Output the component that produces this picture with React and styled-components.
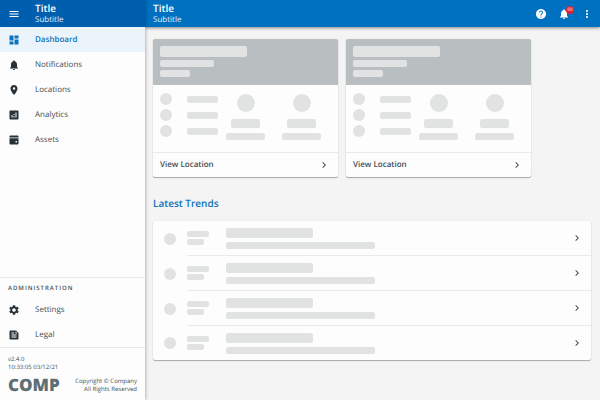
import React from "react";
import styled, { createGlobalStyle, css } from "styled-components";
import {
  MdMenu,
  MdDashboard,
  MdNotifications,
  MdPlace,
  MdAnalytics,
  MdSettings,
  MdFeed,
  MdHelp,
  MdMoreVert,
  MdChevronRight,
} from "react-icons/md";

const GlobalStyle = createGlobalStyle`
  *, *::before, *::after { box-sizing: border-box; }
  body {
    margin: 0;
    background: #f4f4f4;
    color: #424e54;
    font-family: "Open Sans", "Noto Sans", sans-serif;
    font-size: 8px;
    line-height: 11px;
    text-rendering: geometricPrecision;
  }
  svg { display: block; flex: none; }
`;

const Page = styled.div`
  display: flex;
  min-height: 100vh;
`;

const Drawer = styled.aside`
  position: relative;
  display: flex;
  flex: 0 0 145px;
  flex-direction: column;
  background: #fdfdfd;
  box-shadow: 0 0 4px rgba(0, 0, 0, 0.4);
`;

const Main = styled.main`
  flex: 1;
  min-width: 0;
`;

const Bar = styled.header`
  display: flex;
  align-items: center;
  height: 27px;
  padding: ${(p) => (p.$drawer ? "0" : "0 7px 0 8px")};
  background: ${(p) => (p.$drawer ? "#005eae" : "#0070c0")};
  color: #fff;
  box-shadow: ${(p) => (p.$drawer ? "none" : "0 1px 3px rgba(0, 0, 0, 0.45)")};
`;

const Titles = styled.div`
  flex: 1;
`;

const Title = styled.h1`
  margin: 0;
  font-size: 10px;
  font-weight: 600;
  line-height: 12px;
`;

const Subtitle = styled.div`
  font-size: 8px;
  line-height: 11px;
  color: #e3eff8;
`;

const buttonReset = css`
  margin: 0;
  padding: 0;
  border: 0;
  background: none;
  color: inherit;
  font: inherit;
  text-align: left;
  text-rendering: inherit;
  cursor: pointer;
`;

const MenuButton = styled.button`
  ${buttonReset}
  display: flex;
  justify-content: center;
  width: 27px;
  margin-right: 8px;
`;

const Actions = styled.div`
  display: flex;
  gap: 11px;
`;

const ActionButton = styled.button`
  ${buttonReset}
  position: relative;
`;

const Badge = styled.span`
  position: absolute;
  top: -2px;
  right: -4px;
  width: 8px;
  height: 8px;
  border-radius: 4px;
  background: #e0202c;
  color: #fbd5d7;
  font-size: 5px;
  line-height: 8px;
  text-align: center;
`;

const Nav = styled.nav`
  display: flex;
  flex-direction: column;
`;

const NavLink = styled.a`
  display: flex;
  align-items: center;
  height: 25px;
  background: ${(p) => (p.$active ? "#eaf4fa" : "transparent")};
  color: ${(p) => (p.$active ? "#0b72bc" : "#424e54")};
  font-weight: ${(p) => (p.$active ? 600 : 400)};
  text-decoration: none;
`;

const NavIcon = styled.span`
  display: flex;
  justify-content: center;
  width: 27px;
  margin-right: 8px;
  color: ${(p) => (p.$active ? "#0b72bc" : "#263238")};
`;

const Admin = styled.section`
  margin-top: auto;
  border-top: 1px solid #e8eaea;
  border-bottom: 1px solid #e8eaea;
`;

const AdminHeading = styled.h2`
  margin: 0;
  padding: 5px 8px 4px;
  font-size: 6px;
  font-weight: 600;
  line-height: 10px;
  letter-spacing: 1px;
  text-transform: uppercase;
`;

const Footer = styled.footer`
  padding: 7px 8px 6px;
  font-size: 6px;
  line-height: 8px;
`;

const Brand = styled.div`
  display: flex;
  align-items: center;
  justify-content: space-between;
  margin-top: 5px;
`;

const Logo = styled.div`
  color: #5f6e74;
  font-size: 17px;
  font-weight: 800;
  line-height: 18px;
`;

const Copyright = styled.div`
  text-align: right;
`;

const Content = styled.div`
  padding: 12px 9px 8px 8px;
`;

const Cards = styled.div`
  display: flex;
  flex-wrap: wrap;
  gap: 8px;
`;

const surface = css`
  overflow: hidden;
  border-radius: 2px;
  background: #fdfdfd;
  box-shadow: 0 1px 1px rgba(0, 0, 0, 0.3), 0 0 2px rgba(0, 0, 0, 0.08);
`;

const Card = styled.article`
  ${surface}
  width: 185px;
`;

const CardHeader = styled.div`
  display: flex;
  flex-direction: column;
  gap: 3px;
  height: 46px;
  padding: 7px;
  background: #b9bfc1;
`;

const CardBody = styled.div`
  display: flex;
  height: 67px;
  padding: 8px 7px 0;
`;

const Facts = styled.div`
  display: flex;
  flex-direction: column;
  gap: 4px;
  width: 58px;
`;

const Fact = styled.div`
  display: flex;
  align-items: center;
  justify-content: space-between;
`;

const Stats = styled.div`
  display: flex;
  gap: 17px;
  margin-left: 8px;
`;

const Stat = styled.div`
  display: flex;
  flex-direction: column;
  align-items: center;
`;

const Block = styled.div`
  flex: none;
  width: ${(p) => p.$w}px;
  height: ${(p) => p.$h}px;
  margin-top: ${(p) => p.$top || 0}px;
  border-radius: 2px;
  background: #e1e3e3;
`;

const Dot = styled.div`
  flex: none;
  width: ${(p) => p.$size}px;
  height: ${(p) => p.$size}px;
  margin-top: ${(p) => p.$top || 0}px;
  border-radius: 50%;
  background: #e1e3e3;
`;

const CardAction = styled.button`
  ${buttonReset}
  display: flex;
  align-items: center;
  justify-content: space-between;
  width: 100%;
  height: 25px;
  padding: 0 8px 0 7px;
  border-top: 1px solid #e8eaea;
  font-weight: 600;
  line-height: 10px;
`;

const SectionTitle = styled.h2`
  margin: 19px 0 11px;
  color: #0b72bc;
  font-size: 10px;
  font-weight: 600;
  line-height: 14px;
`;

const List = styled.div`
  ${surface}
`;

const Row = styled.button`
  ${buttonReset}
  display: flex;
  align-items: stretch;
  width: 100%;
`;

const RowLead = styled.span`
  display: flex;
  align-items: center;
  justify-content: center;
  width: 34px;
`;

const RowMain = styled.span`
  display: flex;
  flex: 1;
  align-items: center;
  height: ${(p) => (p.$last ? 34 : 35)}px;
  padding-right: 8px;
  border-bottom: ${(p) => (p.$last ? "none" : "1px solid #e8eaea")};
`;

const RowStack = styled.span`
  display: flex;
  flex-direction: column;
  gap: ${(p) => p.$gap}px;
  width: ${(p) => (p.$wide ? "auto" : "39px")};
  flex: ${(p) => (p.$wide ? "1" : "none")};
`;

function AssetsIcon() {
  return (
    <svg width="12" height="12" viewBox="0 0 24 24" fill="currentColor" aria-hidden="true">
      <path d="M5 3h14c1.100 0 2 .9 2 2v2H3V5c0-1.100.9-2 2-2z" />
      <path
        fillRule="evenodd"
        d="M3 8.500h18V19c0 1.100-.9 2-2 2H5c-1.100 0-2-.9-2-2V8.500zM15 14v3h3v-3h-3z"
      />
    </svg>
  );
}

const primaryNav = [
  { label: "Dashboard", icon: <MdDashboard size={12} />, active: true },
  { label: "Notifications", icon: <MdNotifications size={12} /> },
  { label: "Locations", icon: <MdPlace size={12} /> },
  { label: "Analytics", icon: <MdAnalytics size={12} /> },
  { label: "Assets", icon: <AssetsIcon /> },
];

const adminNav = [
  { label: "Settings", icon: <MdSettings size={12} /> },
  { label: "Legal", icon: <MdFeed size={12} /> },
];

function NavItem({ label, icon, active }) {
  return (
    <NavLink href="#" $active={active} aria-current={active ? "page" : undefined}>
      <NavIcon $active={active}>{icon}</NavIcon>
      {label}
    </NavLink>
  );
}

function LocationCard() {
  return (
    <Card>
      <CardHeader>
        <Block $w={87} $h={11} />
        <Block $w={54} $h={7} />
        <Block $w={30} $h={7} />
      </CardHeader>
      <CardBody>
        <Facts>
          {[0, 1, 2].map((i) => (
            <Fact key={i}>
              <Dot $size={12} />
              <Block $w={31} $h={7} />
            </Fact>
          ))}
        </Facts>
        <Stats>
          {[0, 1].map((i) => (
            <Stat key={i}>
              <Dot $size={18} $top={1} />
              <Block $w={29} $h={9} $top={7} />
              <Block $w={39} $h={7} $top={5} />
            </Stat>
          ))}
        </Stats>
      </CardBody>
      <CardAction type="button">
        View Location
        <MdChevronRight size={12} />
      </CardAction>
    </Card>
  );
}

function TrendRow({ index, last }) {
  return (
    <Row type="button" aria-label={`Open trend ${index + 1}`}>
      <RowLead>
        <Dot as="span" $size={12} />
      </RowLead>
      <RowMain $last={last}>
        <RowStack $gap={2}>
          <Block as="span" $w={22} $h={6} />
          <Block as="span" $w={17} $h={6} />
        </RowStack>
        <RowStack $gap={4} $wide>
          <Block as="span" $w={87} $h={10} />
          <Block as="span" $w={149} $h={7} />
        </RowStack>
        <MdChevronRight size={12} />
      </RowMain>
    </Row>
  );
}

export default function App() {
  return (
    <>
      <GlobalStyle />
      <Page>
        <Drawer>
          <Bar $drawer>
            <MenuButton type="button" aria-label="Toggle menu">
              <MdMenu size={12} />
            </MenuButton>
            <Titles>
              <Title as="div">Title</Title>
              <Subtitle>Subtitle</Subtitle>
            </Titles>
          </Bar>
          <Nav>
            {primaryNav.map((item) => (
              <NavItem key={item.label} {...item} />
            ))}
          </Nav>
          <Admin>
            <AdminHeading>Administration</AdminHeading>
            <Nav>
              {adminNav.map((item) => (
                <NavItem key={item.label} {...item} />
              ))}
            </Nav>
          </Admin>
          <Footer>
            <div>v2.4.0</div>
            <div>10:33:05 03/12/21</div>
            <Brand>
              <Logo>COMP</Logo>
              <Copyright>
                Copyright © Company
                <br />
                All Rights Reserved
              </Copyright>
            </Brand>
          </Footer>
        </Drawer>
        <Main>
          <Bar>
            <Titles>
              <Title>Title</Title>
              <Subtitle>Subtitle</Subtitle>
            </Titles>
            <Actions>
              <ActionButton type="button" aria-label="Help">
                <MdHelp size={12} />
              </ActionButton>
              <ActionButton type="button" aria-label="Notifications">
                <MdNotifications size={12} />
                <Badge>88</Badge>
              </ActionButton>
              <ActionButton type="button" aria-label="More options">
                <MdMoreVert size={12} />
              </ActionButton>
            </Actions>
          </Bar>
          <Content>
            <Cards>
              <LocationCard />
              <LocationCard />
            </Cards>
            <SectionTitle>Latest Trends</SectionTitle>
            <List>
              {[0, 1, 2, 3].map((i) => (
                <TrendRow key={i} index={i} last={i === 3} />
              ))}
            </List>
          </Content>
        </Main>
      </Page>
    </>
  );
}
